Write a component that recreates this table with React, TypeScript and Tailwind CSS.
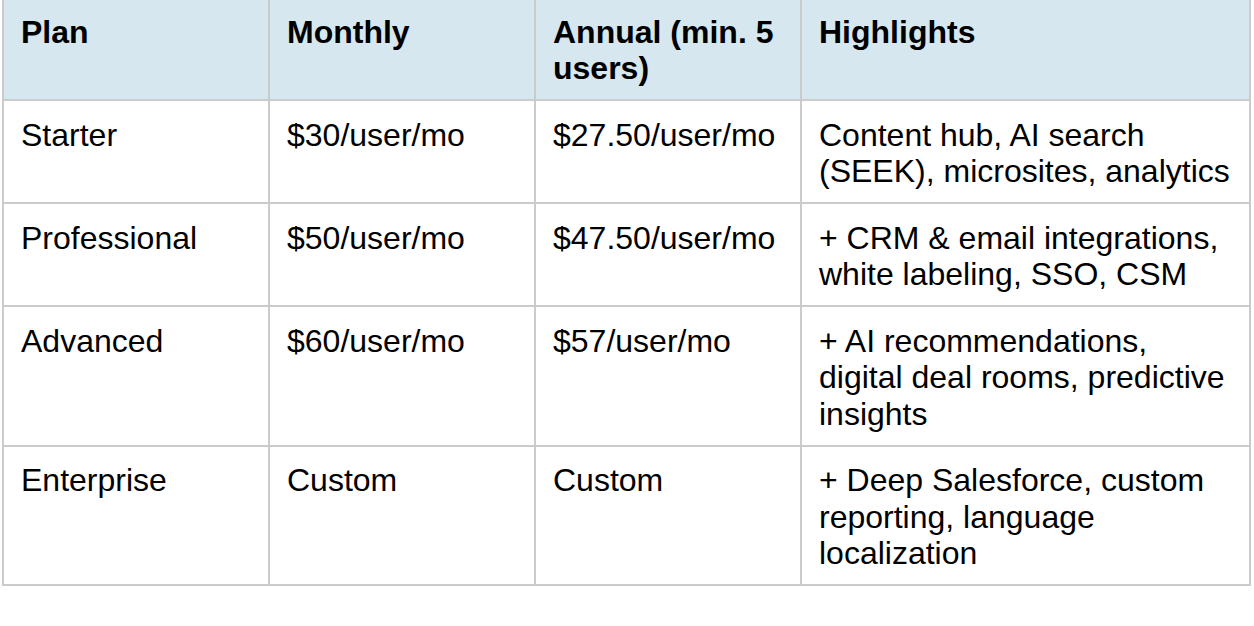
const rows = [
  {
    plan: "Starter",
    monthly: "$30/user/mo",
    annual: "$27.50/user/mo",
    highlights: ["Content hub, AI search", "(SEEK), microsites, analytics"],
  },
  {
    plan: "Professional",
    monthly: "$50/user/mo",
    annual: "$47.50/user/mo",
    highlights: ["+ CRM & email integrations,", "white labeling, SSO, CSM"],
  },
  {
    plan: "Advanced",
    monthly: "$60/user/mo",
    annual: "$57/user/mo",
    highlights: ["+ AI recommendations,", "digital deal rooms, predictive", "insights"],
  },
  {
    plan: "Enterprise",
    monthly: "Custom",
    annual: "Custom",
    highlights: ["+ Deep Salesforce, custom", "reporting, language", "localization"],
  },
]

const cell = "border-2 border-[#cbcbcb] px-[17px] pt-[15.5px] pb-[12.5px] align-top whitespace-nowrap"

function Lines({ lines }: { lines: string[] }) {
  return (
    <>
      {lines.map((l, i) => (
        <div key={i}>{l}</div>
      ))}
    </>
  )
}

export default function App() {
  return (
    <div className="w-[1254px] h-[626px] bg-white overflow-hidden" style={{ fontFamily: '"Liberation Sans", Arial, sans-serif' }}>
      <table className="table-fixed border-collapse w-[1247px] ml-[2px] -mt-[4px] text-[32px] leading-[36.5px] text-black">
        <colgroup>
          <col className="w-[266px]" />
          <col className="w-[266px]" />
          <col className="w-[266px]" />
          <col className="w-[449px]" />
        </colgroup>
        <thead>
          <tr className="bg-[#d6e7ef] font-bold text-left">
            <th className={cell}>Plan</th>
            <th className={cell}>Monthly</th>
            <th className={cell}>
              <Lines lines={["Annual (min. 5", "users)"]} />
            </th>
            <th className={cell}>Highlights</th>
          </tr>
        </thead>
        <tbody>
          {rows.map((r) => (
            <tr key={r.plan}>
              <td className={cell}>{r.plan}</td>
              <td className={cell}>{r.monthly}</td>
              <td className={cell}>{r.annual}</td>
              <td className={cell}>
                <Lines lines={r.highlights} />
              </td>
            </tr>
          ))}
        </tbody>
      </table>
    </div>
  )
}
